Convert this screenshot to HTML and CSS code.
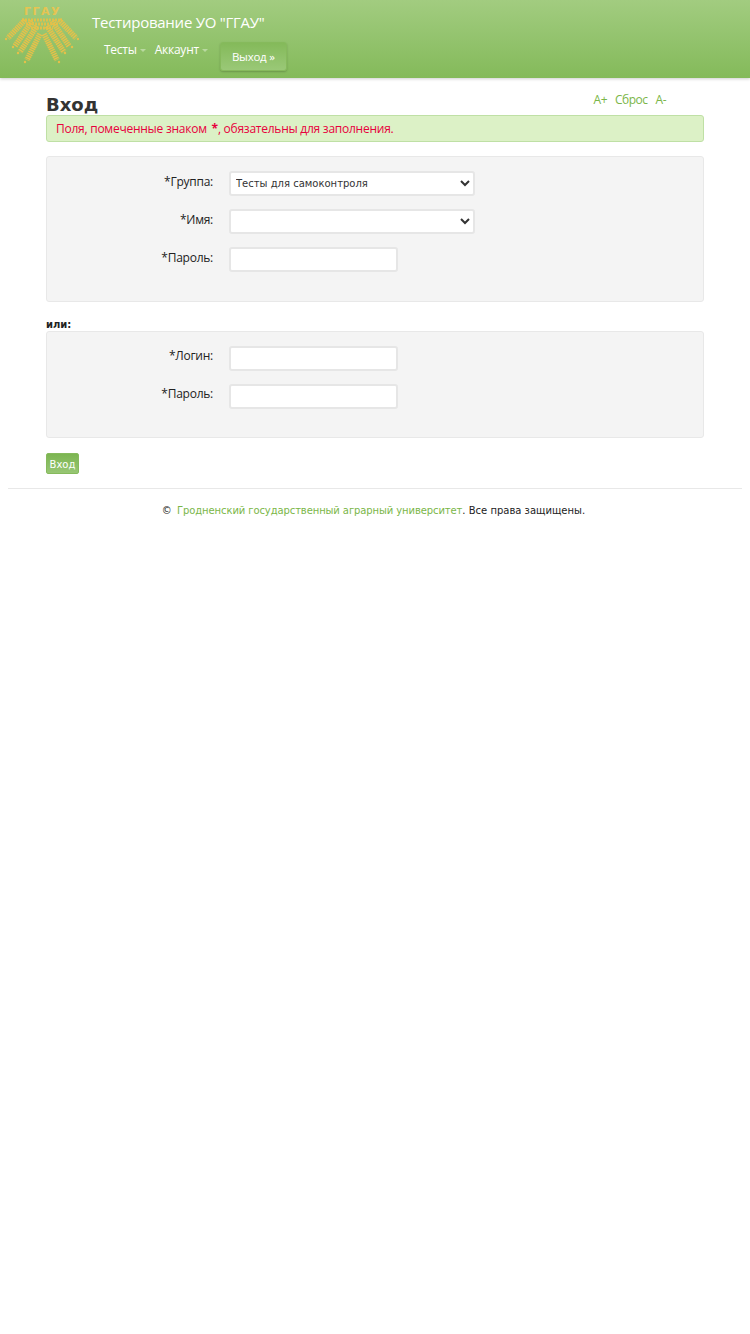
FILE: index.html
```html
<!DOCTYPE html>
<html lang="ru">
<head>
    <meta charset="UTF-8">
    <meta name="viewport" content="width=device-width, initial-scale=1.0">
    <title>Вход</title>
    <link rel="stylesheet" href="styles.css">
</head>
<body>
    <header class="navbar">
        <svg class="logo" width="74" height="64" viewBox="5 2 74 64">
            <text class="logo-text" x="42.5" y="15" text-anchor="middle">ГГАУ</text>
            <g class="lattice">
                <path d="M22 20 H62"/>
                <path d="M26 24 H58"/>
                <path d="M31 28 H53"/>
            </g>
            <g class="ears">
                <path d="M25 20 L8 38"/>
                <path d="M32 21 L15 46"/>
                <path d="M37 26 L20 52"/>
                <path d="M40 34 L27 60"/>
                <path d="M59 20 L76 38"/>
                <path d="M52 21 L69 46"/>
                <path d="M47 26 L64 52"/>
                <path d="M44 34 L57 60"/>
            </g>
            <g class="grains">
                <circle cx="6" cy="39" r="1.2"/>
                <circle cx="13" cy="47" r="1.2"/>
                <circle cx="18" cy="53" r="1.2"/>
                <circle cx="25" cy="62" r="1.2"/>
                <circle cx="78" cy="39" r="1.2"/>
                <circle cx="72" cy="47" r="1.2"/>
                <circle cx="65" cy="53" r="1.2"/>
                <circle cx="59" cy="62" r="1.2"/>
            </g>
        </svg>
        <div class="navbar-main">
            <a class="brand" href="#">Тестирование УО "ГГАУ"</a>
            <nav class="nav">
                <a class="nav-link" href="#">Тесты<span class="caret"></span></a>
                <a class="nav-link" href="#">Аккаунт<span class="caret"></span></a>
                <a class="btn-logout" href="#">Выход »</a>
            </nav>
        </div>
    </header>

    <div class="container">
        <div class="title-row">
            <h1>Вход</h1>
            <div class="font-size">
                <a href="#">A+</a>
                <a href="#">Сброс</a>
                <a href="#">A-</a>
            </div>
        </div>

        <div class="alert">Поля, помеченные знаком <b class="mark">*</b>, обязательны для заполнения.</div>

        <form>
            <div class="well">
                <div class="form-group">
                    <label for="group">*Группа:</label>
                    <select id="group" class="select-wide">
                        <option>Тесты для самоконтроля</option>
                    </select>
                </div>
                <div class="form-group">
                    <label for="name">*Имя:</label>
                    <select id="name" class="select-wide">
                        <option></option>
                    </select>
                </div>
                <div class="form-group">
                    <label for="pass1">*Пароль:</label>
                    <input type="password" id="pass1">
                </div>
            </div>

            <div class="or">или:</div>

            <div class="well well-second">
                <div class="form-group">
                    <label for="login">*Логин:</label>
                    <input type="text" id="login">
                </div>
                <div class="form-group">
                    <label for="pass2">*Пароль:</label>
                    <input type="password" id="pass2">
                </div>
            </div>

            <button type="button" class="btn-submit">Вход</button>
        </form>
    </div>

    <hr class="footer-line">
    <footer class="footer">© <a class="footer-link" href="#">Гродненский государственный аграрный университет</a>. Все права защищены.</footer>
</body>
</html>
```

FILE: styles.css
```css
body {
    font-family: "Open Sans", Tahoma, sans-serif;
    font-size: 12px;
    letter-spacing: -0.25px;
    line-height: 18px;
    margin: 0;
    color: #222;
    background: #fff;
}
a {
    color: #7ab648;
    text-decoration: none;
}

/* header */
.navbar {
    display: flex;
    height: 78px;
    box-sizing: border-box;
    padding: 2px 0 0 5px;
    background: linear-gradient(to bottom, #a2cc80, #84ba5a);
    box-shadow: 0 1px 3px rgba(0, 0, 0, 0.2);
}
.logo {
    flex: none;
}
.logo-text {
    font-family: "DejaVu Sans", Verdana, sans-serif;
    font-size: 11px;
    font-weight: bold;
    letter-spacing: 1.5px;
    fill: #e6c452;
}
.ears path {
    fill: none;
    stroke: #e6c04a;
    stroke-width: 5.5;
    stroke-dasharray: 1.5 0.7;
}
.lattice path {
    fill: none;
    stroke: #e0c04a;
    stroke-width: 3;
    stroke-dasharray: 2 1;
}
.grains circle {
    fill: #e6c04a;
}
.navbar-main {
    margin-left: 13px;
    padding-top: 10px;
}
.brand {
    display: block;
    color: #fff;
    font-size: 15px;
    letter-spacing: -0.25px;
    line-height: 20px;
}
.nav {
    display: flex;
    align-items: flex-start;
    padding-left: 12px;
    margin-top: 8px;
}
.nav-link {
    color: #fff;
    line-height: 20px;
    margin-right: 9px;
}
.caret {
    display: inline-block;
    margin-left: 3px;
    vertical-align: middle;
    border-top: 3px solid #b9d9a0;
    border-left: 3px solid transparent;
    border-right: 3px solid transparent;
}
.btn-logout {
    margin: 2px 0 0 3px;
    padding: 5px 11px;
    font-size: 11.5px;
    line-height: 17px;
    color: #fff;
    border: 1px solid #86ba5c;
    border-radius: 3px;
    background: linear-gradient(to bottom, #84ba5a, #9ac877);
    box-shadow: 0 1px 2px rgba(0, 0, 0, 0.2);
}

/* content */
.container {
    margin: 0 46px;
}
.title-row {
    display: flex;
    justify-content: space-between;
    height: 37px;
    box-sizing: border-box;
    padding-top: 14px;
}
h1 {
    margin: 0;
    font-family: "DejaVu Sans", Verdana, sans-serif;
    font-size: 18px;
    letter-spacing: 0;
    line-height: 26px;
    color: #333;
}
.font-size {
    display: flex;
    gap: 8px;
    margin: -1px 38px 0 0;
    letter-spacing: -0.5px;
}
.font-size a {
    line-height: 18px;
}
.alert {
    height: 27px;
    box-sizing: border-box;
    padding: 4px 9px;
    color: #e8003d;
    background: #dcf1c6;
    border: 1px solid #bfe0a5;
    border-radius: 3px;
}
.mark {
    margin-left: 2px;
}
.well {
    height: 146px;
    box-sizing: border-box;
    margin-top: 14px;
    padding: 14px 0 0;
    background: #f4f4f4;
    border: 1px solid #e8e8e8;
    border-radius: 3px;
}
.well-second {
    height: 107px;
    margin-top: 0;
}
.form-group {
    display: flex;
    align-items: center;
    height: 25px;
    margin-bottom: 13px;
}
label {
    width: 166px;
    margin: -4px 16px 0 0;
    text-align: right;
}
.well-second label {
    margin-top: -5px;
}
select, input {
    box-sizing: border-box;
    height: 25px;
    padding-left: 1px;
    background: #fff;
    border: 2px solid #e6e6e6;
    border-radius: 3px;
    font-family: "DejaVu Sans", Verdana, sans-serif;
    font-size: 10px;
    letter-spacing: 0;
    color: #333;
}
.select-wide {
    width: 246px;
}
input {
    width: 169px;
}
.or {
    margin-top: 15px;
    height: 14px;
    font-family: "DejaVu Sans", Verdana, sans-serif;
    font-size: 10px;
    letter-spacing: 0;
    line-height: 15px;
    font-weight: bold;
    color: #222;
}
.btn-submit {
    display: block;
    width: 33px;
    height: 21px;
    padding: 1px 0 0;
    margin-top: 15px;
    border: 1px solid #86ba5c;
    border-radius: 2px;
    background: linear-gradient(to bottom, #7cb551, #97c674);
    color: #fff;
    font-family: "DejaVu Sans", Verdana, sans-serif;
    font-size: 10px;
    letter-spacing: 0;
}

/* footer */
.footer-line {
    margin: 14px 8px 0;
    border: 0;
    border-top: 1px solid #e8e8e8;
}
.footer {
    margin-top: 13px;
    padding-right: 3px;
    font-family: "DejaVu Sans", Verdana, sans-serif;
    font-size: 10px;
    letter-spacing: 0;
    color: #222;
    text-align: center;
}
.footer-link {
    margin-left: 2px;
    letter-spacing: -0.1px;
}
```
